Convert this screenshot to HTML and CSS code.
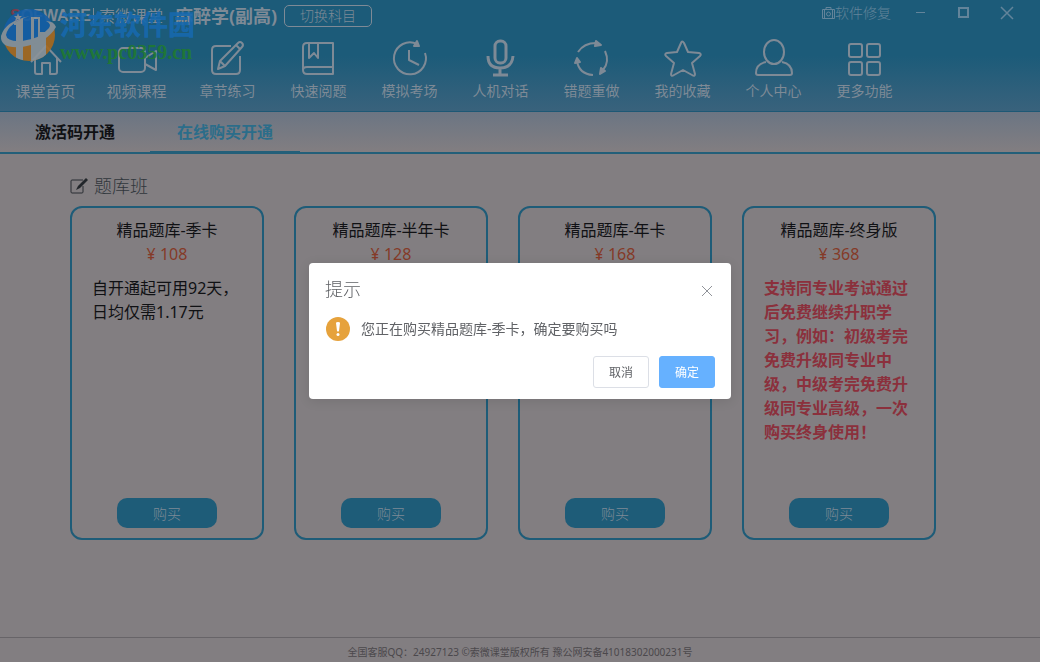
FILE: index.html
```html
<!DOCTYPE html>
<html lang="zh-CN">
  <head>
    <meta charset="UTF-8" />
    <meta name="viewport" content="width=device-width, initial-scale=1.0" />
    <title>索微课堂</title>
    <link rel="stylesheet" href="styles.css">
  </head>
  <body>
    <header class="header">
      <div class="topbar">
        <div class="brand">
          <span class="brand-en"><span class="brand-s">S</span>OFWARE</span>
          <span class="brand-cn">索微课堂</span>
        </div>
        <h1 class="subject">麻醉学(副高)</h1>
        <button class="switch" type="button">切换科目</button>
        <div class="window-tools">
          <a class="repair" href="#">
            <svg width="13" height="12" viewBox="0 0 13 12"><path d="M.5 2.500h12v9H.5zM4 2.500v-2h5v2M2.500 2.500v9M10.500 2.500v9"/><circle cx="6.500" cy="7" r="2"/></svg>软件修复</a>
          <button class="win-btn" type="button" aria-label="最小化"><svg width="14" height="14" viewBox="0 0 14 14"><path d="M2 6.500h9"/></svg></button>
          <button class="win-btn" type="button" aria-label="最大化"><svg width="14" height="14" viewBox="0 0 14 14"><path stroke-width="2" d="M2 2h9v9H2z"/></svg></button>
          <button class="win-btn" type="button" aria-label="关闭"><svg width="14" height="14" viewBox="0 0 14 14"><path stroke-width="1.500" d="M1 1l12 12M13 1L1 13"/></svg></button>
        </div>
      </div>
      <nav class="nav">
        <a class="nav-item big" href="#">
          <svg viewBox="0 0 38 38"><path d="M4 23L19 7l15 16M8 19v14q0 2 2 2h5V24h8v11h5q2 0 2-2V19"/></svg>课堂首页</a>
        <a class="nav-item big" href="#">
          <svg viewBox="0 0 38 38"><rect x="1" y="9" width="26" height="24" rx="4"/><path d="M27 19l11-7v19l-11-6"/></svg>视频课程</a>
        <a class="nav-item" href="#">
          <svg viewBox="0 0 38 38"><path d="M22 7H7q-4 0-4 4v20q0 4 4 4h20q4 0 4-4V17M9 30l2-8L29 4q2-2 4 0t0 4L16 27zM27 6l4 4M11 22l5 5"/></svg>章节练习</a>
        <a class="nav-item" href="#">
          <svg viewBox="0 0 38 38"><path d="M33 28V4H7Q3 4 3 8v23q0 4 4 4h26v-7H7q-4 0-4 3M9 4v15l5-5 4 5V4"/></svg>快速阅题</a>
        <a class="nav-item" href="#">
          <svg viewBox="0 0 38 38"><path d="M34 14A16 16 0 1 1 26 5M18 11v10l10 5"/><path class="solid" d="M26 2l2 5-5 0z"/></svg>模拟考场</a>
        <a class="nav-item" href="#">
          <svg class="heavy" viewBox="0 0 38 38"><rect x="13" y="2" width="11" height="22" rx="5"/><path d="M6 17q0 12 12 12t13-12M18 29v7M11 36h15"/></svg>人机对话</a>
        <a class="nav-item" href="#">
          <svg viewBox="0 0 38 38"><path d="M5 13Q11 4 23 4M32 12q5 11-2 19M20 36Q6 35 4 22"/><path class="solid" d="M23 2l5 4-6 1zM28 29l4 3-5 3zM2 24l2-5 3 4z"/></svg>错题重做</a>
        <a class="nav-item" href="#">
          <svg viewBox="0 0 38 38"><path d="M17 4q1-3 3 0l4 9 11 1q3 1 1 3l-8 7 3 11q0 3-3 1l-9-5-9 5q-3 2-3-1l3-11-8-7q-2-2 1-3l10-1z"/></svg>我的收藏</a>
        <a class="nav-item" href="#">
          <svg viewBox="0 0 38 38"><ellipse cx="19" cy="13" rx="10" ry="12"/><path d="M11 23Q1 25 1 34q0 2 2 2h32q2 0 2-2 0-9-10-11"/></svg>个人中心</a>
        <a class="nav-item" href="#">
          <svg viewBox="0 0 38 38"><rect x="3" y="5" width="13" height="13" rx="2"/><rect x="21" y="5" width="13" height="13" rx="2"/><rect x="3" y="23" width="13" height="13" rx="2"/><rect x="21" y="23" width="13" height="13" rx="2"/></svg>更多功能</a>
      </nav>
      <div class="watermark">
        <svg width="56" height="56" viewBox="0 0 56 56">
          <defs><clipPath id="disc"><circle cx="29" cy="28" r="26"/></clipPath></defs>
          <g clip-path="url(#disc)">
            <path fill="#145ea6" d="M0 0h56v20Q36 38 0 38z"/>
            <path fill="#a9691d" d="M0 37q34 2 56-17v36H0z"/>
            <path fill="#8c9399" d="M14 16l9-5v45h-7V18h-2zM31 10h9v15h6v31H31z"/>
            <path fill="#145ea6" d="M34 12h4v20h-4z"/>
          </g>
          <path fill="#8c9399" d="M30 9Q5 14 1 29q-1 13 21 11 25-4 34-20-2-6-10-6 6 3 3 7-9 11-27 13-15 1-16-6 2-12 24-19z"/>
          <path fill="#8c9399" d="M18 6l1 3h3l-2 2 1 3-3-2-3 2 1-3-2-2h3z"/>
        </svg>
        <div class="watermark-text">
          <div class="watermark-name">河东软件园</div>
          <div class="watermark-url">www.pc0359.cn</div>
        </div>
      </div>
    </header>

    <div class="tabs">
      <a class="tab" href="#">激活码开通</a>
      <a class="tab active" href="#">在线购买开通</a>
    </div>

    <main class="content">
      <h2 class="section-title">
        <svg width="19" height="18" viewBox="0 0 19 18"><path fill="none" stroke="#292d33" d="M13 3H2q-1 0-1 1v11q0 1 1 1h10q1 0 1-1V9"/><path fill="#22262b" d="M6 13l2-4 8-8 2 2-8 8z"/></svg>题库班</h2>
      <div class="cards">
        <div class="card">
          <h3>精品题库-季卡</h3>
          <p class="price">¥ 108</p>
          <p class="desc">自开通起可用92天，日均仅需1.17元</p>
          <button class="buy" type="button">购买</button>
        </div>
        <div class="card">
          <h3>精品题库-半年卡</h3>
          <p class="price">¥ 128</p>
          <button class="buy" type="button">购买</button>
        </div>
        <div class="card">
          <h3>精品题库-年卡</h3>
          <p class="price">¥ 168</p>
          <button class="buy" type="button">购买</button>
        </div>
        <div class="card">
          <h3>精品题库-终身版</h3>
          <p class="price">¥ 368</p>
          <p class="desc hot">支持同专业考试通过后免费继续升职学习，例如：初级考完免费升级同专业中级，中级考完免费升级同专业高级，一次购买终身使用！</p>
          <button class="buy" type="button">购买</button>
        </div>
      </div>
    </main>

    <footer class="footer">全国客服QQ：24927123 ©索微课堂版权所有 豫公网安备41018302000231号</footer>

    <div class="modal">
      <div class="dialog" role="dialog" aria-labelledby="dialog-title">
        <div class="dialog-head">
          <h2 id="dialog-title">提示</h2>
          <button class="close" type="button" aria-label="关闭"><svg width="12" height="12" viewBox="0 0 12 12"><path d="M1 1l10 10M11 1L1 11"/></svg></button>
        </div>
        <div class="dialog-body">
          <svg width="24" height="24" viewBox="0 0 24 24"><circle cx="12" cy="12" r="12" fill="#e6a23c"/><path fill="#fff" d="M10 6q0-1 2-1t2 1l-1 8q-1 1-2 0z"/><circle cx="12" cy="17.500" r="1.500" fill="#fff"/></svg>
          <p>您正在购买精品题库-季卡，确定要购买吗</p>
        </div>
        <div class="dialog-foot">
          <button class="btn" type="button">取消</button>
          <button class="btn primary" type="button">确定</button>
        </div>
      </div>
    </div>
  </body>
</html>
```
FILE: styles.css
```css
*{
    margin: 0;
    padding: 0;
    box-sizing: border-box;
}

body{
    display: flex;
    flex-direction: column;
    min-height: 100vh;
    background-color: #827e81;
    color: #101114;
    font-family: "Noto Sans", "Noto Sans CJK SC", sans-serif;
    font-size: 16px;
    line-height: 24px;
}

button{
    font-family: inherit;
    cursor: pointer;
}

a{
    color: inherit;
    text-decoration: none;
}

svg{
    flex: none;
}

/* header */
.header{
    position: relative;
    height: 112px;
    background: linear-gradient(#1c5b79 50%, #39627c);
    border-bottom: 1px solid #1d5875;
    color: #7e8a96;
}

.topbar{
    display: flex;
    align-items: center;
    height: 32px;
    padding-left: 10px;
}

.brand{
    display: flex;
    align-items: center;
    width: 165px;
    line-height: 16px;
}

.brand-en{
    width: 83px;
    font-family: "Liberation Sans", sans-serif;
    font-weight: bold;
    text-align: right;
    padding-right: 4px;
}

.brand-s{
    color: #7a3b4c;
}

.brand-cn{
    padding-left: 5px;
    border-left: 1px solid #7e8a96;
}

.subject{
    width: 109px;
    font-size: 18px;
    white-space: nowrap;
}

.switch{
    width: 88px;
    height: 22px;
    border: 1px solid #7e8a96;
    border-radius: 5px;
    background: none;
    color: inherit;
    font-size: 14px;
    font-weight: 300;
    line-height: 20px;
}

.window-tools{
    display: flex;
    align-items: center;
    height: 26px;
    margin-left: auto;
    margin-bottom: 6px;
    padding-right: 12px;
    color: #63849a;
}

.window-tools svg{
    fill: none;
    stroke: currentColor;
}

.repair{
    display: flex;
    align-items: center;
    margin-right: 8px;
    font-size: 14px;
    font-weight: 300;
}

.win-btn{
    display: flex;
    align-items: center;
    justify-content: center;
    width: 43px;
    height: 26px;
    border: 0;
    background: none;
    color: inherit;
}

.nav{
    display: flex;
    padding-top: 7px;
}

.nav-item{
    display: flex;
    flex-direction: column;
    align-items: center;
    width: 91px;
    gap: 4px;
    font-size: 14px;
    line-height: 20px;
}

.nav-item.big{
    font-size: 15px;
}

.nav-item svg{
    width: 38px;
    height: 38px;
    overflow: visible;
    fill: none;
    stroke: #7e8a96;
    stroke-width: 2;
    stroke-linejoin: round;
}

.nav-item .heavy{
    stroke-width: 3;
}

.nav-item .solid{
    fill: #7e8a96;
}

/* site mark lying over the header */
.watermark{
    position: absolute;
    top: 7px;
    left: 0;
    display: flex;
    gap: 4px;
    opacity: .9;
}

.watermark-name{
    color: #1769ae;
    font-size: 27px;
    font-weight: 900;
    line-height: 36px;
}

.watermark-url{
    color: #207a32;
    font-family: "Liberation Serif", serif;
    font-size: 20px;
    font-weight: bold;
    line-height: 18px;
}

/* tabs */
.tabs{
    display: flex;
    height: 42px;
    border-bottom: 2px solid #235f79;
    background: linear-gradient(#6b7583, #827e81);
}

.tab{
    width: 150px;
    height: 40px;
    text-align: center;
    font-weight: bold;
    line-height: 40px;
}

.tab.active{
    border-bottom: 1px solid #235f79;
    color: #2b6d8a;
}

/* cards */
.content{
    flex: 1;
    padding: 20px 70px;
}

.section-title{
    display: flex;
    align-items: center;
    gap: 5px;
    margin-bottom: 8px;
    color: #30363c;
    font-size: 18px;
    font-weight: 300;
}

.cards{
    display: grid;
    grid-template-columns: repeat(auto-fill, 194px);
    gap: 30px;
}

.card{
    display: flex;
    flex-direction: column;
    align-items: center;
    min-height: 334px;
    padding: 10px 20px;
    border: 2px solid #1e5c78;
    border-radius: 12px;
}

.card h3{
    font-size: 16px;
    font-weight: normal;
}

.price{
    color: #853a28;
}

.desc{
    align-self: stretch;
    margin-top: 10px;
}

.desc.hot{
    color: #8b303c;
    font-weight: bold;
}

.buy{
    width: 100px;
    height: 30px;
    margin-top: auto;
    border: 0;
    border-radius: 10px;
    background-color: #1e5c78;
    color: #7e8a96;
    font-size: 14px;
    font-weight: 300;
}

.footer{
    height: 25px;
    border-top: 1px solid #676468;
    color: #4b484c;
    font-size: 10px;
    line-height: 28px;
    text-align: center;
}

/* dialog */
.modal{
    position: fixed;
    inset: 0;
    display: flex;
    align-items: center;
    justify-content: center;
}

.dialog{
    width: 422px;
    padding: 14px 16px 11px;
    border-radius: 4px;
    background-color: #fff;
    box-shadow: 0 2px 12px rgba(0, 0, 0, .1);
    color: #606266;
}

.dialog-head{
    display: flex;
    align-items: center;
    justify-content: space-between;
}

.dialog-head h2{
    font-size: 18px;
    font-weight: 300;
}

.close{
    display: flex;
    padding: 4px 2px 0;
    border: 0;
    background: none;
}

.close path{
    stroke: #909399;
}

.dialog-body{
    display: flex;
    align-items: center;
    gap: 11px;
    padding: 16px 1px 15px;
    font-size: 14px;
}

.dialog-foot{
    display: flex;
    justify-content: flex-end;
    gap: 10px;
}

.btn{
    width: 56px;
    height: 32px;
    border: 1px solid #dcdfe6;
    border-radius: 3px;
    background-color: #fff;
    color: #606266;
    font-size: 12px;
}

.btn.primary{
    border-color: #66b1ff;
    background-color: #66b1ff;
    color: #fff;
}
```
